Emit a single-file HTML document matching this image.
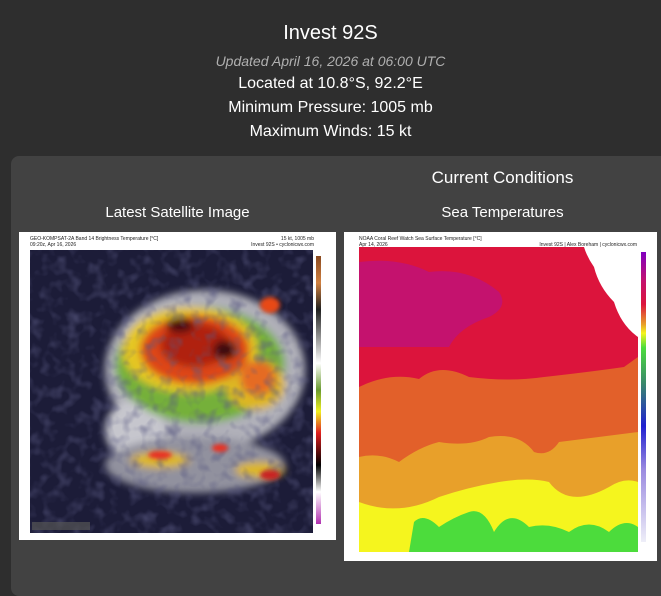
<!DOCTYPE html>
<html><head><meta charset="utf-8"><style>
html,body{margin:0;padding:0;width:661px;height:567px;overflow:hidden;background:#2e2e2e;font-family:"Liberation Sans",sans-serif;color:#fff}
.c{position:absolute;left:0;width:661px;text-align:center}
.panel{position:absolute;left:11px;top:156px;width:680px;height:440px;background:#424242;border-radius:8px}
.fr{position:absolute;background:#fff}
.sm{position:absolute;font-size:5px;color:#222;white-space:nowrap;line-height:6px}
</style></head><body>
<div class="c" style="top:22px;font-size:20px">Invest 92S</div>
<div class="c" style="top:53px;font-size:14px;font-style:italic;color:#b0b0b0">Updated April 16, 2026 at 06:00 UTC</div>
<div class="c" style="top:75px;font-size:16px">Located at 10.8°S, 92.2°E</div>
<div class="c" style="top:99px;font-size:16px">Minimum Pressure: 1005 mb</div>
<div class="c" style="top:123px;font-size:16px">Maximum Winds: 15 kt</div>
<div class="panel"></div>
<div style="position:absolute;left:345px;width:315px;top:168px;text-align:center;font-size:17px">Current Conditions</div>
<div style="position:absolute;left:19px;width:317px;top:204px;text-align:center;font-size:15px">Latest Satellite Image</div>
<div style="position:absolute;left:344px;width:317px;top:204px;text-align:center;font-size:15px">Sea Temperatures</div>

<div class="fr" style="left:19px;top:232px;width:317px;height:308px">
<div class="sm" style="left:11px;top:4px">GEO-KOMPSAT-2A Band 14 Brightness Temperature [°C]<br>09:20z, Apr 16, 2026</div>
<div class="sm" style="right:22px;top:4px;text-align:right">15 kt, 1005 mb<br>Invest 92S • cyclonicwx.com</div>
<svg style="position:absolute;left:11px;top:18px" width="283" height="283" viewBox="0 0 283 283">
<defs><filter id="b"><feGaussianBlur stdDeviation="4"/></filter><filter id="b2"><feGaussianBlur stdDeviation="2"/></filter>
<filter id="n"><feTurbulence type="fractalNoise" baseFrequency="0.08" numOctaves="2" seed="3"/><feColorMatrix values="0 0 0 0 0.1  0 0 0 0 0.1  0 0 0 0 0.22  0 0 0 -2.2 1.2"/></filter></defs>
<rect width="283" height="283" fill="#1c1c38"/>
<g filter="url(#b)" opacity=".95">
<ellipse cx="175" cy="120" rx="100" ry="80" fill="#b8b8c0"/>
<ellipse cx="105" cy="180" rx="30" ry="30" fill="#d0d0d6"/>
<ellipse cx="165" cy="215" rx="90" ry="28" fill="#9898a4"/>
<ellipse cx="170" cy="115" rx="85" ry="58" fill="#7ab83a"/>
<ellipse cx="160" cy="100" rx="68" ry="43" fill="#f0d020"/>
<ellipse cx="225" cy="135" rx="30" ry="25" fill="#e8c020"/>
<ellipse cx="165" cy="100" rx="55" ry="35" fill="#e84818"/>
<ellipse cx="228" cy="128" rx="18" ry="18" fill="#f07020"/>
<ellipse cx="165" cy="95" rx="35" ry="22" fill="#b82010"/>
<ellipse cx="195" cy="100" rx="12" ry="10" fill="#401010"/>
<ellipse cx="150" cy="75" rx="14" ry="8" fill="#501010"/>
<ellipse cx="130" cy="210" rx="30" ry="8" fill="#e8c020"/>
<ellipse cx="230" cy="220" rx="25" ry="8" fill="#e8c020"/>
</g>
<rect width="283" height="283" filter="url(#n)" opacity=".6"/>
<g filter="url(#b2)">
<ellipse cx="130" cy="205" rx="12" ry="4" fill="#e83020"/>
<ellipse cx="240" cy="225" rx="10" ry="5" fill="#c82020"/>
<ellipse cx="190" cy="198" rx="8" ry="4" fill="#e83020"/>
<ellipse cx="240" cy="55" rx="10" ry="8" fill="#e84818"/>
</g>
<rect x="2" y="272" width="58" height="8" fill="#555" opacity=".7"/>
</svg>
<div style="position:absolute;left:297px;top:24px;width:5px;height:268px;background:linear-gradient(#8a4a20,#d08040 10%,#202020 20%,#fff 40%,#6a9a30 50%,#f0f020 58%,#e02020 66%,#000 78%,#fff 88%,#b030b0)"></div>
</div>

<div class="fr" style="left:344px;top:232px;width:313px;height:329px">
<div class="sm" style="left:15px;top:4px">NOAA Coral Reef Watch Sea Surface Temperature [°C]<br>Apr 14, 2026</div>
<div class="sm" style="right:20px;top:10px">Invest 92S | Alex Boreham | cyclonicwx.com</div>
<svg style="position:absolute;left:15px;top:15px" width="279" height="305" viewBox="0 0 279 305">
<rect width="279" height="305" fill="#dc143c"/>
<path d="M0 15 Q40 10 70 25 Q110 20 140 45 Q150 60 130 70 Q100 80 90 100 L0 100Z" fill="#c4126e"/>
<path d="M0 140 Q30 125 60 132 Q80 115 110 130 Q150 135 185 130 Q230 125 265 120 L279 110 L279 305 L0 305Z" fill="#e2602a"/>
<path d="M0 210 Q20 205 40 215 Q60 200 80 195 Q110 200 130 190 Q160 185 175 205 Q190 210 200 195 Q240 190 279 185 L279 305 L0 305Z" fill="#e8a02a"/>
<path d="M0 255 Q40 270 80 250 Q110 240 140 235 Q170 230 190 235 Q210 262 250 240 Q265 230 279 235 L279 305 L0 305Z" fill="#f5f51e"/>
<path d="M50 305 L55 275 Q65 265 80 280 Q95 270 110 265 Q125 260 135 285 Q150 260 170 280 Q190 275 210 285 Q230 270 250 285 Q265 270 279 280 L279 305Z" fill="#4cdc3c"/>
<path d="M225 0 L279 0 L279 90 Q262 78 255 55 Q240 40 235 20 Q228 10 225 0Z" fill="#fff"/>
</svg>
<div style="position:absolute;left:297px;top:20px;width:5px;height:290px;background:linear-gradient(#8000c0,#c4126e 10%,#dc143c 18%,#e8a02a 25%,#f5f51e 28%,#4cdc3c 33%,#3a8a6a 45%,#2020d0 60%,#9a8ae0 75%,#eeeef8)"></div>
</div>
</body></html>
